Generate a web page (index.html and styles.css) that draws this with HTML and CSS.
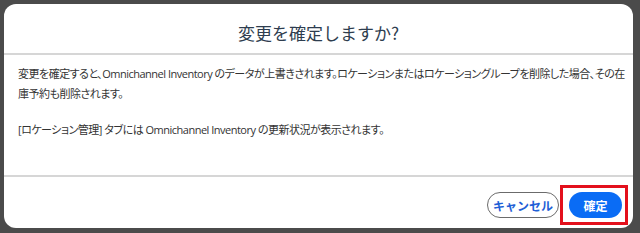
FILE: index.html
```
<!DOCTYPE html>
<html lang="ja">
<head>
    <meta charset="UTF-8">
    <meta name="viewport" content="width=device-width, initial-scale=1.0">
    <title>変更を確定しますか?</title>
    <link rel="stylesheet" href="styles.css">
</head>
<body>
    <div class="dialog">
        <div class="dialog-header">
            <h1>変更を確定しますか?</h1>
        </div>

        <div class="dialog-body">
            <p>変更を確定すると、Omnichannel Inventory のデータが上書きされます。ロケーションまたはロケーショングループを削除した場合、その在庫予約も削除されます。</p>
            <p>[ロケーション管理] タブには Omnichannel Inventory の更新状況が表示されます。</p>
        </div>

        <div class="dialog-footer">
            <button class="btn btn-cancel">キャンセル</button>
            <span class="highlight">
                <button class="btn btn-confirm">確定</button>
            </span>
        </div>
    </div>
</body>
</html>
```

FILE: styles.css
```
body {
    margin: 0;
    padding: 4px 7px 5px 4px;
    background-color: #4b4b4b;
    font-family: "Noto Sans CJK JP", "Noto Sans", sans-serif;
}

.dialog {
    background-color: #ffffff;
    border-radius: 12px;
    height: 224px;
    display: flex;
    flex-direction: column;
    overflow: hidden;
}

.dialog-header {
    padding: 17px 0 8px;
    border-bottom: 2px solid #d6d6d6;
    text-align: center;
}

.dialog-header h1 {
    margin: 0;
    font-size: 17px;
    font-weight: normal;
    line-height: 24px;
    color: #2e3d4f;
}

.dialog-body {
    flex: 1;
    padding: 9px 4px 0 14px;
    border-bottom: 2px solid #d6d6d6;
}

.dialog-body p {
    margin: 0 0 16px;
    font-family: "Open Sans", "Noto Sans CJK JP", sans-serif;
    font-size: 11px;
    line-height: 20px;
    letter-spacing: -0.5px;
    color: #333333;
    font-feature-settings: "palt";
}

.dialog-footer {
    display: flex;
    justify-content: flex-end;
    align-items: center;
    gap: 1px;
    padding: 8px 5px 3px;
}

.btn {
    height: 26px;
    padding: 0;
    border-radius: 13px;
    font-family: inherit;
    font-size: 12px;
    font-weight: bold;
    white-space: nowrap;
    cursor: pointer;
}

.btn-cancel {
    width: 72px;
    background-color: #ffffff;
    border: 1px solid #6b6b6b;
    color: #1f5fd6;
}

.btn-confirm {
    width: 53px;
    background-color: #0a6cf5;
    border: none;
    color: #ffffff;
}

.highlight {
    display: inline-flex;
    padding: 4px 3px 4px 6px;
    border: 3px solid #e3101c;
}
```
